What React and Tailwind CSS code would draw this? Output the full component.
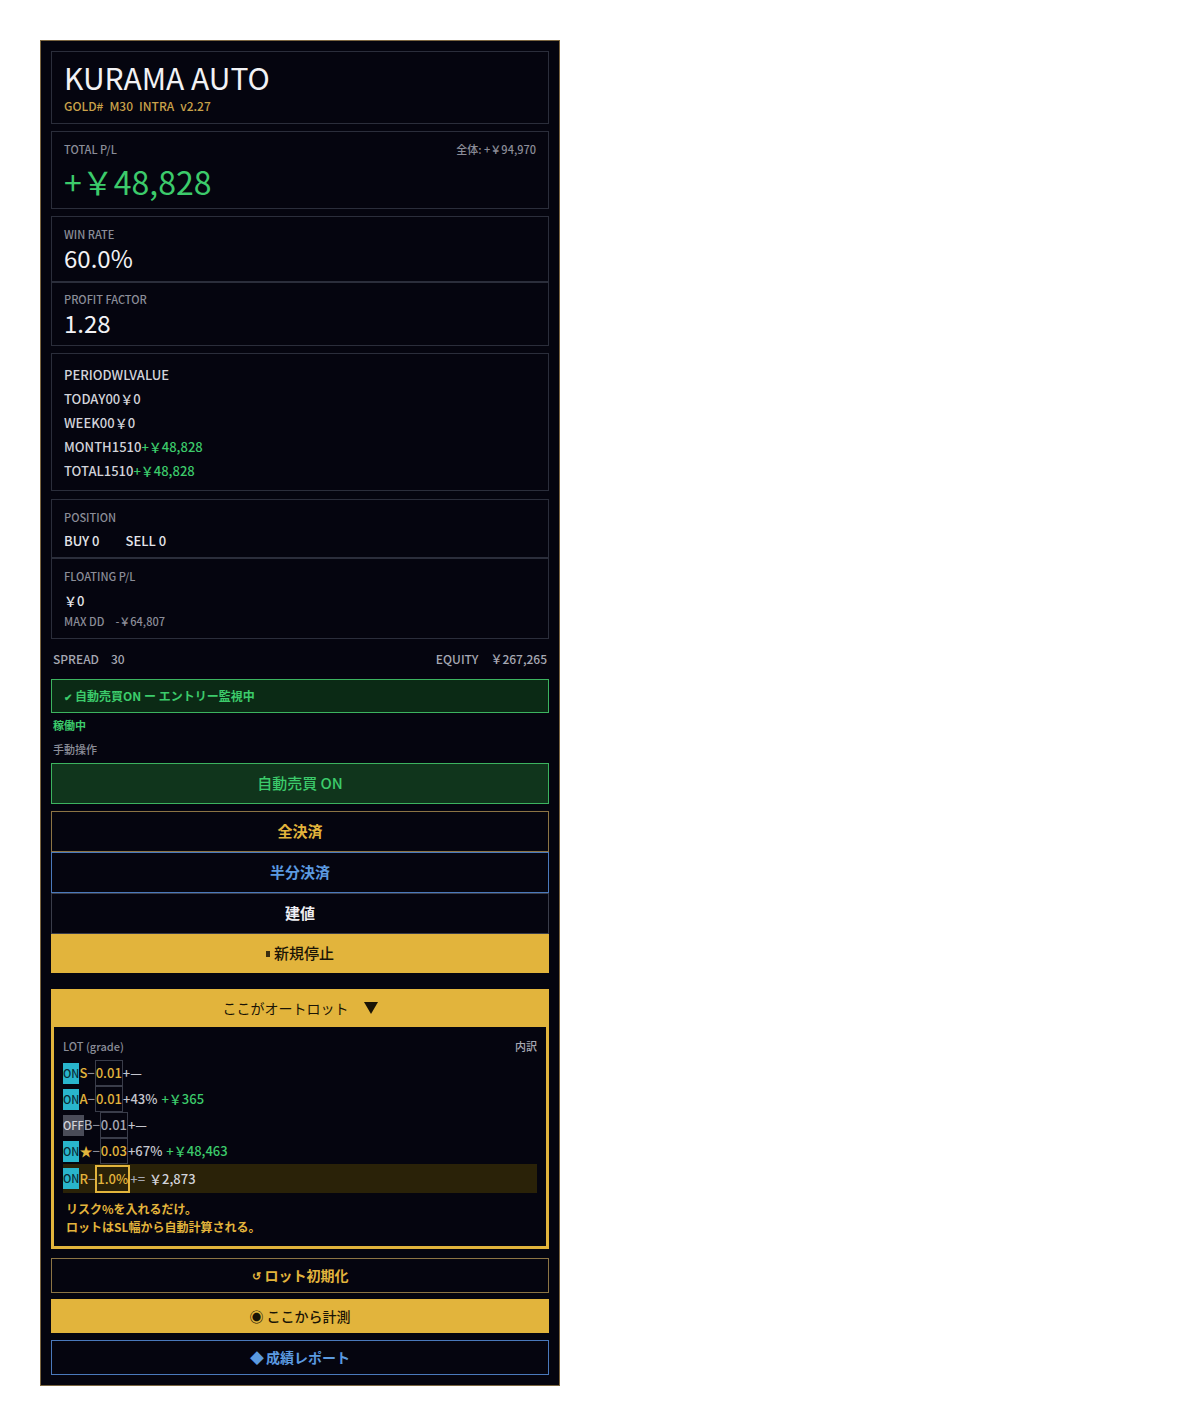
import React from "react";

const font = { fontFamily: '"Noto Sans CJK JP", "Noto Sans", sans-serif' };

const periods = [
  { p: "TODAY", w: "0", l: "0", v: "￥0", pos: false },
  { p: "WEEK", w: "0", l: "0", v: "￥0", pos: false },
  { p: "MONTH", w: "15", l: "10", v: "+￥48,828", pos: true },
  { p: "TOTAL", w: "15", l: "10", v: "+￥48,828", pos: true },
];

const lots = [
  { on: true, g: "S", lot: "0.01", tail: "+—", gain: "" },
  { on: true, g: "A", lot: "0.01", tail: "+43%", gain: "+￥365" },
  { on: false, g: "B", lot: "0.01", tail: "+—", gain: "" },
  { on: true, g: "★", lot: "0.03", tail: "+67%", gain: "+￥48,463" },
];

function Card({ children, className = "" }) {
  return (
    <div className={"border border-[#2b2e3b] bg-[#05050f] px-3 " + className}>
      {children}
    </div>
  );
}

function Label({ children }) {
  return (
    <div className="text-[11px] font-medium leading-[14px] text-[#8b8d98]">{children}</div>
  );
}

export default function App() {
  return (
    <div className="min-h-screen bg-white pt-10 pl-10" style={font}>
      <div className="w-[520px] border border-[#7a6540] bg-[#05050f] p-[10px] pb-[10px]">
        {/* Header */}
        <Card className="pt-[9px] pb-[9px]">
          <div className="text-[30px] leading-[32px] text-[#f2f2f5]">KURAMA AUTO</div>
          <div className="mt-[5px] flex gap-[6px] text-[12px] font-medium leading-[16px] text-[#c9a24a]">
            <span>GOLD#</span>
            <span>M30</span>
            <span>INTRA</span>
            <span>v2.27</span>
          </div>
        </Card>

        {/* Total P/L */}
        <Card className="mt-[7px] pt-[10px] pb-[6px]">
          <div className="flex justify-between">
            <Label>TOTAL P/L</Label>
            <div className="text-[11px] font-medium leading-[14px] text-[#8b8d98]">全体: +￥94,970</div>
          </div>
          <div className="mt-[4px] text-[32px] leading-[42px] text-[#3ccb6b]">+￥48,828</div>
        </Card>

        {/* Win rate / PF */}
        <div className="mt-[7px]">
          <Card className="pt-[10px] pb-[7px]">
            <Label>WIN RATE</Label>
            <div className="mt-[1px] text-[24px] leading-[32px] text-[#f2f2f5]">60.0%</div>
          </Card>
          <Card className="pt-[9px] pb-[6px]">
            <Label>PROFIT FACTOR</Label>
            <div className="mt-[1px] text-[24px] leading-[32px] text-[#f2f2f5]">1.28</div>
          </Card>
        </div>

        {/* Period table */}
        <Card className="mt-[7px] pt-[9px] pb-[7px]">
          <div className="text-[13px] font-medium leading-[24px] text-[#d2d3da]">PERIODWLVALUE</div>
          {periods.map((r) => (
            <div key={r.p} className="text-[13px] font-medium leading-[24px] text-[#d2d3da]">
              {r.p}
              {r.w}
              {r.l}
              <span className={r.pos ? "text-[#3ccb6b]" : ""}>{r.v}</span>
            </div>
          ))}
        </Card>

        {/* Position / floating */}
        <div className="mt-[8px]">
          <Card className="pt-[10px] pb-[6px]">
            <Label>POSITION</Label>
            <div className="mt-[7px] flex gap-[26px] text-[13px] font-medium leading-[20px] text-[#e4e5ea]">
              <span>BUY 0</span>
              <span>SELL 0</span>
            </div>
          </Card>
          <Card className="pt-[10px] pb-[10px]">
            <Label>FLOATING P/L</Label>
            <div className="mt-[8px] text-[13px] font-medium leading-[20px] text-[#e4e5ea]">￥0</div>
            <div className="mt-[3px] flex gap-[11px] text-[11px] font-medium leading-[14px] text-[#8b8d98]">
              <span>MAX DD</span>
              <span>-￥64,807</span>
            </div>
          </Card>
        </div>

        {/* Spread / equity */}
        <div className="mt-[12px] flex justify-between px-[2px] text-[12px] font-medium leading-[16px] text-[#a6a8b3]">
          <div className="flex gap-[12px]">
            <span>SPREAD</span>
            <span>30</span>
          </div>
          <div className="flex gap-[12px]">
            <span>EQUITY</span>
            <span>￥267,265</span>
          </div>
        </div>

        {/* Status */}
        <div className="mt-[12px] flex h-[34px] items-center border border-[#3cb35f] bg-[#0b2a15] px-3 text-[12px] font-bold text-[#3ccb6b]">
          <span className="mr-[3px] text-[10px]">✔</span>自動売買ON ー エントリー監視中
        </div>
        <div className="mt-[4px] px-[2px] text-[11px] font-bold leading-[16px] text-[#3ccb6b]">稼働中</div>
        <div className="mt-[8px] px-[2px] text-[11px] font-medium leading-[16px] text-[#8b8d98]">手動操作</div>

        <button className="mt-[6px] flex h-[41px] w-full items-center justify-center border border-[#3cb35f] bg-[#10351c] text-[15px] font-medium text-[#3ccb6b]">
          自動売買 ON
        </button>

        {/* Close buttons */}
        <div className="mt-[7px]">
          <button className="flex h-[41px] w-full items-center justify-center border border-[#8c7444] bg-[#05050f] text-[15px] font-bold text-[#e2b43c]">
            全決済
          </button>
          <button className="flex h-[41px] w-full items-center justify-center border border-[#4a79bb] bg-[#05050f] text-[15px] font-bold text-[#5b9ae0]">
            半分決済
          </button>
          <button className="flex h-[41px] w-full items-center justify-center border border-[#3a3d4a] bg-[#05050f] text-[15px] font-bold text-[#eeeef2]">
            建値
          </button>
          <button className="flex h-[39px] w-full items-center justify-center gap-[4px] bg-[#e2b43c] text-[15px] font-medium text-[#1a1406]">
            <span className="inline-block h-[6px] w-[4px] bg-[#3a2e10]" />
            新規停止
          </button>
        </div>

        {/* Auto lot */}
        <div className="mt-[16px] bg-[#e2b43c] px-[3px] pb-[3px]">
          <div className="flex h-[38px] items-center justify-center gap-[15px] text-[14px] text-[#1a1406]">
            <span>ここがオートロット</span>
            <svg width="14" height="12" viewBox="0 0 14 12">
              <path d="M0 0h14L7 12z" fill="#1a1406" />
            </svg>
          </div>
          <div className="bg-[#05050f] px-[9px] pt-[12px] pb-[10px]">
            <div className="flex justify-between">
              <Label>LOT (grade)</Label>
              <div className="text-[11px] font-medium leading-[14px] text-[#a6a8b3]">内訳</div>
            </div>
            <div className="mt-[7px]">
              {lots.map((r, i) => (
                <div key={i} className="flex h-[26px] items-center text-[13px] font-medium text-[#d2d3da]">
                  <span
                    className={
                      "flex h-[21px] items-center text-[11px] " +
                      (r.on ? "bg-[#29b5cc] text-[#0a2c35]" : "bg-[#4a4c58] text-[#d2d3da]")
                    }
                  >
                    {r.on ? "ON" : "OFF"}
                  </span>
                  <span className={r.on ? "text-[#e2b43c]" : "text-[#a6a8b3]"}>{r.g}</span>
                  <span className="text-[#8b8d98]">−</span>
                  <span
                    className={
                      "flex h-[26px] items-center border border-[#3a3d4a] " +
                      (r.on ? "text-[#e2b43c]" : "text-[#a6a8b3]")
                    }
                  >
                    {r.lot}
                  </span>
                  <span className="text-[#c4c5cd]">{r.tail}</span>
                  {r.gain && <span className="ml-[4px] text-[#3ccb6b]">{r.gain}</span>}
                </div>
              ))}
              <div className="flex h-[29px] items-center bg-[#2a2208] text-[13px] font-medium text-[#d2d3da]">
                <span className="flex h-[21px] items-center bg-[#29b5cc] text-[11px] text-[#0a2c35]">ON</span>
                <span className="text-[#e2b43c]">R</span>
                <span className="text-[#8b8d98]">−</span>
                <span className="flex h-[28px] items-center border-2 border-[#e2b43c] text-[#e2b43c]">1.0%</span>
                <span className="text-[#a6a8b3]">+=</span>
                <span className="ml-[4px] text-[#d2d3da]">￥2,873</span>
              </div>
            </div>
            <div className="mt-[7px] px-[3px] text-[12px] font-bold leading-[18px] text-[#e2b43c]">
              <div>リスク%を入れるだけ。</div>
              <div>ロットはSL幅から自動計算される。</div>
            </div>
          </div>
        </div>

        {/* Bottom actions */}
        <button className="mt-[9px] flex h-[35px] w-full items-center justify-center gap-[4px] border border-[#8c7444] bg-[#05050f] text-[14px] font-bold text-[#e2b43c]">
          <span className="text-[11px]">↺</span>
          ロット初期化
        </button>
        <button className="mt-[6px] flex h-[34px] w-full items-center justify-center gap-[3px] bg-[#e2b43c] text-[14px] font-medium text-[#1a1406]">
          <span>◉</span>
          ここから計測
        </button>
        <button className="mt-[7px] flex h-[35px] w-full items-center justify-center gap-[2px] border border-[#4a79bb] bg-[#05050f] text-[14px] font-bold text-[#5b9ae0]">
          <span>◆</span>
          成績レポート
        </button>
      </div>
    </div>
  );
}
